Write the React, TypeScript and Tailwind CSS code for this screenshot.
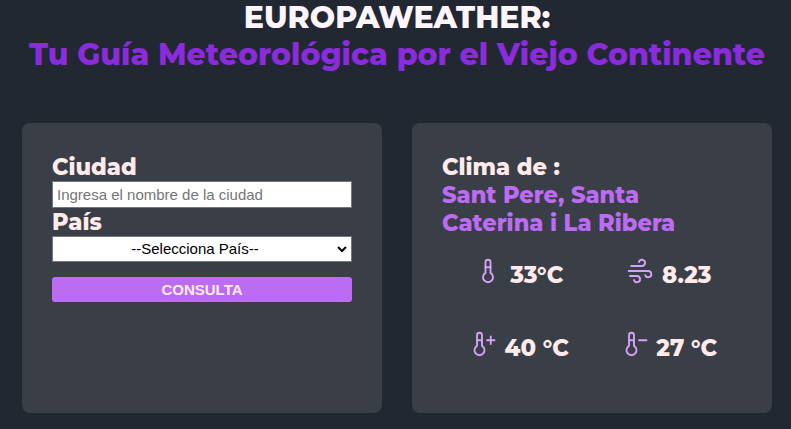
import {
  TbTemperature,
  TbTemperatureMinus,
  TbTemperaturePlus,
  TbWind,
} from "react-icons/tb";
import type { ReactNode } from "react";

const heading = "font-['Montserrat','Inter',sans-serif] font-extrabold";

function Metric({ icon, children }: { icon: ReactNode; children: ReactNode }) {
  return (
    <div className="flex h-[73px] items-start justify-center gap-[7.5px]">
      <span className="text-[#d5a2f7]">{icon}</span>
      <span className={`${heading} mt-[4.5px] whitespace-nowrap text-[22.7px] leading-[28px] text-[#ffebeb]`}>
        {children}
      </span>
    </div>
  );
}

export default function App() {
  return (
    <div className="h-[429px] w-[791px] overflow-hidden bg-[#222831]">
      <h1 className={`${heading} -mt-px flex h-[124px] flex-col items-center whitespace-nowrap pl-[3px] text-[30px] leading-[37px] text-[#fff5ff]`}>
        <span>EUROPAWEATHER:</span>
        <span className="text-[#8a2bdc]">Tu Guía Meteorológica por el Viejo Continente</span>
      </h1>
      <main className="flex gap-[30px] pl-[22px]">
        <form className="flex h-[290px] w-[360px] flex-col rounded-lg bg-[#3a3e46] px-[30px] pt-[30px]">
          <label className={`${heading} h-[28px] text-[22.5px] leading-[28px] text-[#ffebeb]`}>
            <span>Ciudad</span>
          </label>
          <input
            className="h-[27px] w-full border border-[#767676] bg-white px-1 font-['Liberation_Sans',Arial,sans-serif] text-[15px] placeholder:text-[#757575]"
            placeholder="Ingresa el nombre de la ciudad"
          />
          <label className={`${heading} h-[28px] text-[22.5px] leading-[28px] text-[#ffebeb]`}>
            <span>País</span>
          </label>
          <div className="flex h-[26px] items-center justify-center border border-[#767676] bg-white pr-[4px] font-['Liberation_Sans',Arial,sans-serif] text-[15px] text-black">
            <span className="flex-1 text-center">--Selecciona País--</span>
            <svg width="10" height="8" viewBox="0 0 10 8" fill="none" stroke="#000" strokeWidth="2">
              <path d="M1 2l4 4 4-4" />
            </svg>
          </div>
          <button
            type="button"
            className="mt-[15px] h-[25px] rounded-[3px] bg-[#bb6cf2] font-['Liberation_Sans',Arial,sans-serif] text-[15px] font-bold leading-[25px] text-[#ffebeb]"
          >
            CONSULTA
          </button>
        </form>
        <section className="h-[290px] w-[360px] rounded-lg bg-[#3a3e46] px-[30px] pt-[30px]">
          <h2 className={`${heading} flex flex-col items-start whitespace-nowrap text-[22.5px] leading-[28px] text-[#ffebeb]`}>
            <span>Clima de :</span>
            <span className="text-[#bb6cf2]">Sant Pere, Santa</span>
            <span className="text-[#bb6cf2]">Caterina i La Ribera</span>
          </h2>
          <div className="mt-[19px] grid grid-cols-[152px_148px]">
            <Metric icon={<TbTemperature size={30} strokeWidth={1.5} />}><span>33°C</span></Metric>
            <Metric icon={<TbWind size={30} strokeWidth={1.5} />}><span>8.23</span></Metric>
            <Metric icon={<TbTemperaturePlus size={30} strokeWidth={1.5} />}><span>40 °C</span></Metric>
            <Metric icon={<TbTemperatureMinus size={30} strokeWidth={1.5} />}><span>27 °C</span></Metric>
          </div>
        </section>
      </main>
    </div>
  );
}
